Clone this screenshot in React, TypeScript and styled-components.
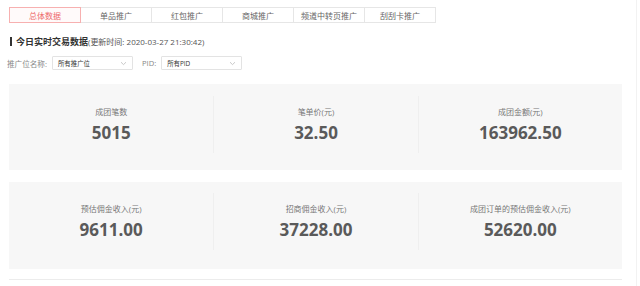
import React, { useState } from 'react';
import styled, { createGlobalStyle } from 'styled-components';

const GlobalStyle = createGlobalStyle`
    html, body {
        margin: 0;
        padding: 0;
        background: #fff;
        font-family: "Open Sans", "Noto Sans CJK SC", sans-serif;
    }
`

const Page = styled.div`
    width: 637px;
    height: 286px;
    box-sizing: border-box;
    border-right: 1px solid #f2f2f2;
    padding: 7px 0 0 9px;
`

const Content = styled.div`
    width: 613px;
    display: flex;
    flex-flow: column nowrap;
`

const Tabs = styled.div`
    display: flex;
    flex-flow: row nowrap;
`

const Tab = styled.div<{ $active?: boolean }>`
    width: 72px;
    height: 16px;
    box-sizing: border-box;
    margin-left: -1px;
    display: flex;
    align-items: center;
    justify-content: center;
    font-size: 8px;
    cursor: pointer;
    position: relative;
    border: 1px solid ${p => p.$active ? '#f7b0b0' : '#e6e6e6'};
    color: ${p => p.$active ? '#ee6b6b' : '#666'};
    background: ${p => p.$active ? '#fffafa' : '#fff'};
    z-index: ${p => p.$active ? 1 : 0};

    &:first-child{
        margin-left: 0;
    }
`

const Heading = styled.div`
    margin-top: 12px;
    height: 12px;
    display: flex;
    align-items: center;
    padding-left: 1px;

    &:before{
        content: "";
        display: block;
        width: 2px;
        height: 9px;
        background: #333;
        margin-right: 4px;
    }

    h2{
        margin: 0;
        font-size: 9px;
        font-weight: bold;
        color: #333;
    }

    span{
        font-size: 8px;
        color: #555;
    }
`

const Filters = styled.div`
    margin-top: 9px;
    display: flex;
    align-items: center;
    height: 14px;
`

const FilterLabel = styled.label`
    font-size: 7.6px;
    color: #888;
    margin-right: 5px;
    margin-left: -2px;
`

const Select = styled.div`
    width: 81px;
    height: 14px;
    box-sizing: border-box;
    border: 1px solid #e3e3e3;
    border-radius: 1px;
    display: flex;
    align-items: center;
    justify-content: space-between;
    padding: 0 5px 0 5px;
    margin-right: 11px;
    font-size: 6.4px;
    color: #333;

    svg{
        color: #bbb;
    }
`

const Card = styled.div`
    margin-top: 14px;
    background: #f7f7f7;
    height: 86px;
    box-sizing: border-box;
    padding-top: 12px;
    display: grid;
    grid-template-columns: repeat(3, 1fr);
    align-items: start;

    & + &{
        margin-top: 12px;
        height: 87px;
        padding-top: 11px;
    }
`

const Stat = styled.div`
    height: 57px;
    display: flex;
    flex-flow: column nowrap;
    align-items: center;
    padding-top: 11px;
    box-sizing: border-box;

    & + &{
        border-left: 1px solid #efefef;
    }
`

const StatLabel = styled.div`
    font-size: 8px;
    line-height: 10px;
    color: #777;
`

const StatValue = styled.div`
    margin-top: 5px;
    font-size: 17px;
    line-height: 22px;
    font-weight: bold;
    color: #5a5a5a;
`

const Rule = styled.div`
    margin-top: 10px;
    height: 1px;
    background: #ececec;
`

const Chevron = () => (
    <svg width="7" height="5" viewBox="0 0 7 5" fill="none">
        <path d="M1 1.2 L3.5 3.6 L6 1.2" stroke="currentColor" strokeWidth="0.8" />
    </svg>
)

const tabs = ['总体数据', '单品推广', '红包推广', '商城推广', '频道中转页推广', '刮刮卡推广']

const rows = [
    [
        { label: '成团笔数', value: '5015' },
        { label: '笔单价(元)', value: '32.50' },
        { label: '成团金额(元)', value: '163962.50' },
    ],
    [
        { label: '预估佣金收入(元)', value: '9611.00' },
        { label: '招商佣金收入(元)', value: '37228.00' },
        { label: '成团订单的预估佣金收入(元)', value: '52620.00' },
    ],
]

function App(){
    const [active, setActive] = useState(0);
    return(
        <>
            <GlobalStyle />
            <Page>
                <Content>
                    <Tabs>
                        {tabs.map((name, index) => (
                            <Tab key={index} $active={index == active} onClick={() => setActive(index)}>{name}</Tab>
                        ))}
                    </Tabs>

                    <Heading>
                        <h2>今日实时交易数据</h2>
                        <span>(更新时间: 2020-03-27 21:30:42)</span>
                    </Heading>

                    <Filters>
                        <FilterLabel>推广位名称:</FilterLabel>
                        <Select>所有推广位<Chevron /></Select>
                        <FilterLabel>PID:</FilterLabel>
                        <Select>所有PID<Chevron /></Select>
                    </Filters>

                    {rows.map((row, i) => (
                        <Card key={i}>
                            {row.map((stat, j) => (
                                <Stat key={j}>
                                    <StatLabel>{stat.label}</StatLabel>
                                    <StatValue>{stat.value}</StatValue>
                                </Stat>
                            ))}
                        </Card>
                    ))}

                    <Rule />
                </Content>
            </Page>
        </>
    )
}

export default App
